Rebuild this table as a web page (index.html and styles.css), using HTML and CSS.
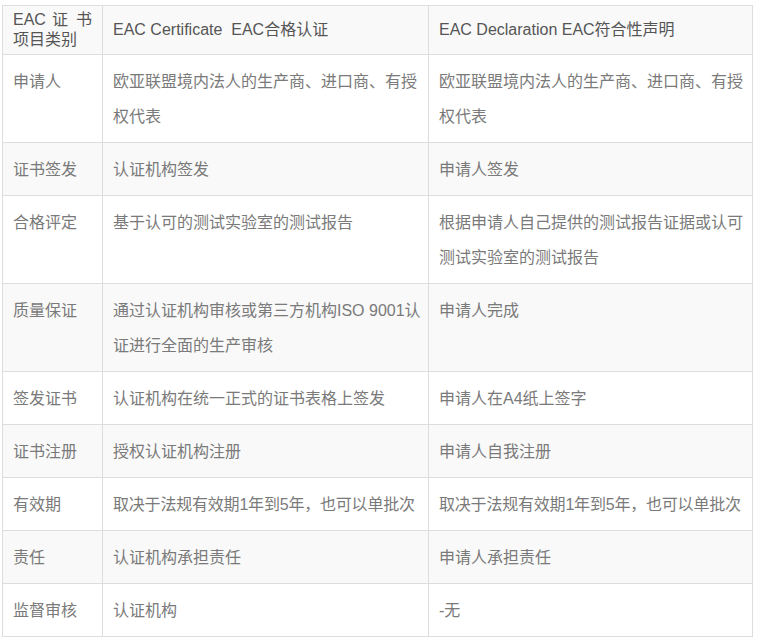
FILE: index.html
```html
<!DOCTYPE html>
<html lang="zh-CN">
<head>
<meta charset="utf-8">
<title>EAC</title>
<link rel="stylesheet" href="styles.css">
</head>
<body>
<table class="cmp">
  <colgroup>
    <col class="c1">
    <col class="c2">
    <col class="c3">
  </colgroup>
  <thead>
    <tr>
      <th><span class="just">EAC 证 书</span><span class="blk">项目类别</span></th>
      <th>EAC Certificate&nbsp; EAC合格认证</th>
      <th>EAC Declaration EAC符合性声明</th>
    </tr>
  </thead>
  <tbody>
    <tr>
      <td>申请人</td>
      <td>欧亚联盟境内法人的生产商、进口商、有授<br>权代表</td>
      <td>欧亚联盟境内法人的生产商、进口商、有授<br>权代表</td>
    </tr>
    <tr class="alt">
      <td>证书签发</td>
      <td>认证机构签发</td>
      <td>申请人签发</td>
    </tr>
    <tr>
      <td>合格评定</td>
      <td>基于认可的测试实验室的测试报告</td>
      <td>根据申请人自己提供的测试报告证据或认可<br>测试实验室的测试报告</td>
    </tr>
    <tr class="alt">
      <td>质量保证</td>
      <td>通过认证机构审核或第三方机构ISO 9001认<br>证进行全面的生产审核</td>
      <td>申请人完成</td>
    </tr>
    <tr>
      <td>签发证书</td>
      <td>认证机构在统一正式的证书表格上签发</td>
      <td>申请人在A4纸上签字</td>
    </tr>
    <tr class="alt">
      <td>证书注册</td>
      <td>授权认证机构注册</td>
      <td>申请人自我注册</td>
    </tr>
    <tr>
      <td>有效期</td>
      <td class="tight2">取决于法规有效期1年到5年，也可以单批次</td>
      <td class="tight2">取决于法规有效期1年到5年，也可以单批次</td>
    </tr>
    <tr class="alt">
      <td>责任</td>
      <td>认证机构承担责任</td>
      <td>申请人承担责任</td>
    </tr>
    <tr>
      <td>监督审核</td>
      <td>认证机构</td>
      <td>-无</td>
    </tr>
  </tbody>
</table>
</body>
</html>
```
FILE: styles.css
```css
html, body {
  margin: 0;
  padding: 0;
  background: #ffffff;
}

body {
  font-family: "Liberation Sans", "Noto Sans CJK SC", sans-serif;
  font-size: 16px;
  color: #7a7a7a;
}

.cmp {
  margin: 5px 0 0 2px;
  width: 750px;
  table-layout: fixed;
  border-collapse: collapse;
  border: 1px solid #dddddd;
}

.c1 { width: 100px; }
.c2 { width: 326px; }
.c3 { width: 324px; }

.cmp th,
.cmp td {
  border: 1px solid #dddddd;
  text-align: left;
  white-space: nowrap;
}

.cmp th {
  font-weight: normal;
  color: #555555;
  background: #f9f9f9;
  line-height: 20px;
  padding: 4px 10px;
  vertical-align: middle;
}

.cmp td {
  line-height: 35px;
  padding: 8.5px 10px;
  vertical-align: top;
}

.cmp tr.alt td {
  background: #f9f9f9;
}

.cmp td.tight2 {
  letter-spacing: -0.2px;
}

.just {
  display: block;
  text-align: justify;
  text-align-last: justify;
}

.blk {
  display: block;
}
```
